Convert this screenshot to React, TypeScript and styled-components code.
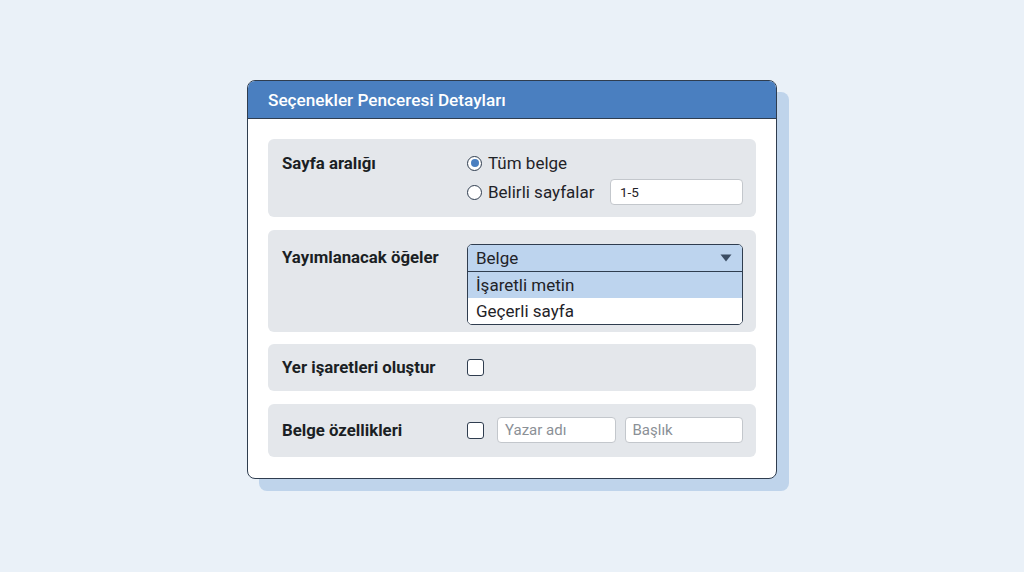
import React from "react";
import styled, { createGlobalStyle } from "styled-components";

const GlobalStyle = createGlobalStyle`
  html, body {
    margin: 0;
    padding: 0;
    background: #eaf1f8;
    font-family: Roboto, "Noto Sans", "Liberation Sans", sans-serif;
  }
  #root {
    min-height: 100vh;
  }
`;

const Page = styled.div`
  width: 1024px;
  height: 572px;
  display: flex;
  justify-content: center;
  padding-top: 80px;
  box-sizing: border-box;
`;

const Window = styled.div`
  width: 530px;
  height: 399px;
  box-sizing: border-box;
  background: #ffffff;
  border: 1.75px solid #2f3d4f;
  border-radius: 8px;
  box-shadow: 12px 12px 0 #bfd4eb;
  overflow: hidden;
  display: flex;
  flex-direction: column;
`;

const TitleBar = styled.div`
  height: 37px;
  flex-shrink: 0;
  background: #4a7fc0;
  border-bottom: 1.5px solid #2f3d4f;
  display: flex;
  align-items: center;
  padding-left: 20px;
  color: #ffffff;
  font-size: 17.2px;
  font-weight: 500;
`;

const Body = styled.div`
  padding: 20px 20px 0 20px;
  display: flex;
  flex-direction: column;
  gap: 12.5px;
`;

const Section = styled.div<{ $pad: string; $align?: string }>`
  background: #e4e7eb;
  border-radius: 6px;
  padding: ${(p) => p.$pad};
  display: grid;
  grid-template-columns: 185px 1fr;
  align-items: ${(p) => p.$align ?? "center"};
`;

const Label = styled.div<{ $line?: number }>`
  font-size: 16.8px;
  font-weight: 700;
  color: #1b1f24;
  line-height: ${(p) => p.$line ?? 24}px;
  white-space: nowrap;
`;

const Controls = styled.div`
  display: flex;
  flex-direction: column;
  gap: 4px;
`;

const Row = styled.div<{ $h: number; $gap?: number }>`
  height: ${(p) => p.$h}px;
  display: flex;
  align-items: center;
  gap: ${(p) => p.$gap ?? 6}px;
`;

const Radio = styled.span<{ $checked?: boolean }>`
  width: 15px;
  height: 15px;
  box-sizing: border-box;
  border-radius: 50%;
  border: 1.5px solid #2f3d4f;
  background: #ffffff;
  display: inline-flex;
  align-items: center;
  justify-content: center;
  flex-shrink: 0;
  &::after {
    content: "";
    width: 8px;
    height: 8px;
    border-radius: 50%;
    background: ${(p) => (p.$checked ? "#4a7fc0" : "transparent")};
  }
`;

const OptionText = styled.span`
  font-size: 17px;
  color: #1f2328;
`;

const TextBox = styled.div<{ $placeholder?: boolean; $width?: number }>`
  height: 26px;
  box-sizing: border-box;
  ${(p) => (p.$width ? `width: ${p.$width}px; margin-left: auto;` : "flex: 1;")}
  background: #ffffff;
  border: 1.5px solid #c3c7cc;
  border-radius: 4px;
  display: flex;
  align-items: center;
  padding-left: ${(p) => (p.$placeholder ? 7 : 9)}px;
  font-size: ${(p) => (p.$placeholder ? 15 : 13.5)}px;
  color: ${(p) => (p.$placeholder ? "#8b9096" : "#1f2328")};
`;

const Select = styled.div`
  border: 1.5px solid #2f3d4f;
  border-radius: 5px;
  overflow: hidden;
  background: #ffffff;
`;

const SelectItem = styled.div<{ $active?: boolean; $head?: boolean }>`
  height: 26px;
  display: flex;
  align-items: center;
  justify-content: space-between;
  padding: 0 10px 0 8px;
  font-size: 17px;
  color: #1f2328;
  background: ${(p) => (p.$active ? "#bdd4ee" : "#ffffff")};
  border-bottom: ${(p) => (p.$head ? "1.5px solid #2f3d4f" : "none")};
`;

const Checkbox = styled.span`
  width: 17px;
  height: 17px;
  box-sizing: border-box;
  border: 1.5px solid #2f3d4f;
  border-radius: 3px;
  background: #ffffff;
  flex-shrink: 0;
`;

const PropFields = styled(Row)`
  & > :nth-child(2) {
    margin-left: 13px;
  }
  & > :nth-child(3) {
    margin-left: 9px;
  }
`;

const Caret = () => (
  <svg width="12" height="8" viewBox="0 0 12 8">
    <path d="M0.5 0.5 H11.5 L6 7.5 Z" fill="#3b4d63" />
  </svg>
);

export default function App() {
  return (
    <>
      <GlobalStyle />
      <Page>
        <Window>
          <TitleBar>Seçenekler Penceresi Detayları</TitleBar>
          <Body>
            <Section $pad="12px 13px 12px 14px" $align="start">
              <Label>Sayfa aralığı</Label>
              <Controls>
                <Row $h={24}>
                  <Radio $checked />
                  <OptionText>Tüm belge</OptionText>
                </Row>
                <Row $h={26}>
                  <Radio />
                  <OptionText>Belirli sayfalar</OptionText>
                  <TextBox $width={133}>1-5</TextBox>
                </Row>
              </Controls>
            </Section>

            <Section $pad="14px 13px 7px 14px" $align="start">
              <Label $line={26}>Yayımlanacak öğeler</Label>
              <Select>
                <SelectItem $active $head>
                  Belge
                  <Caret />
                </SelectItem>
                <SelectItem $active>İşaretli metin</SelectItem>
                <SelectItem>Geçerli sayfa</SelectItem>
              </Select>
            </Section>

            <Section $pad="15px 13px 15px 14px">
              <Label $line={17}>Yer işaretleri oluştur</Label>
              <Row $h={17}>
                <Checkbox />
              </Row>
            </Section>

            <Section $pad="13.5px 13px 13.5px 14px">
              <Label $line={26}>Belge özellikleri</Label>
              <PropFields $h={26} $gap={0}>
                <Checkbox />
                <TextBox $placeholder>Yazar adı</TextBox>
                <TextBox $placeholder>Başlık</TextBox>
              </PropFields>
            </Section>
          </Body>
        </Window>
      </Page>
    </>
  );
}
